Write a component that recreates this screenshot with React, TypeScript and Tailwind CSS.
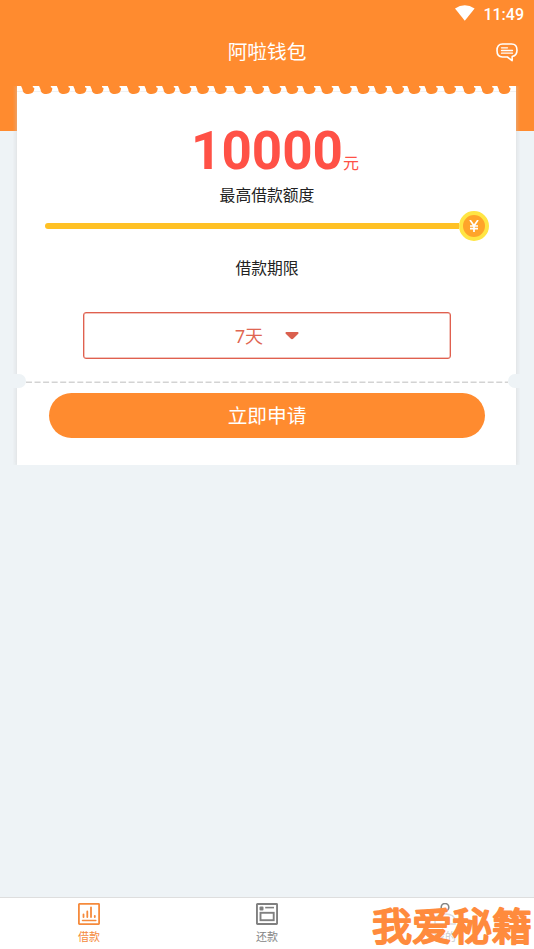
import React from "react";

const teeth = [28.3, 46.3, 64, 80.5, 97.5, 115, 134, 151.7, 169.3, 185.3, 203, 220.7, 240, 258, 275.3, 292.3, 309.5, 327.3, 345.7, 363.5, 381, 398, 414.5, 431.7, 450, 469.5, 487.7, 504.5];

function Wifi() {
  return (
    <svg width="20" height="16" viewBox="0 0 20 16" fill="#fff">
      <path d="M0 3.4Q9.8-3 19.6 3.4L9.8 15.7Z" />
    </svg>
  );
}

function Message() {
  return (
    <svg width="22" height="19" viewBox="0 0 22 19" fill="none" stroke="#fff" strokeWidth="1.6" strokeLinecap="round" strokeLinejoin="round">
      <path d="M6.5 1H15.5C19.2 1 21 3.3 21 7.2C21 11 19.6 12.7 16.2 13.6L16.1 17.7L11.4 14H6.5C2.8 14 1 11.4 1 7.5C1 3.4 2.8 1 6.5 1Z" />
      <path d="M5.5 4.8H11.5M5.5 7.5H16.5M5.5 10.2H16.5" strokeWidth="1.3" />
    </svg>
  );
}

function LoanIcon() {
  return (
    <svg width="22" height="22" viewBox="0 0 22 22" fill="none" stroke="#f58a3c" strokeWidth="1.8">
      <rect x=".9" y=".9" width="20.2" height="20.2" rx=".5" />
      <path d="M5.5 11.3V14M9.3 8.5V14M13 4.5V14M16.8 12.8V14" strokeLinecap="round" />
      <path d="M4.5 17.5H17.8" strokeLinecap="round" strokeWidth="1.5" />
    </svg>
  );
}

function RepayIcon() {
  return (
    <svg width="22" height="22" viewBox="0 0 22 22" fill="none" stroke="#808080" strokeWidth="1.9">
      <rect x=".95" y=".95" width="20.1" height="20.1" rx=".5" />
      <rect x="4.5" y="9.8" width="13.2" height="7.4" />
      <path d="M9.2 4.6H18" strokeWidth="1.6" />
      <rect x="3.5" y="3.6" width="4" height="4" rx="1" fill="#808080" stroke="none" />
    </svg>
  );
}

export default function App() {
  return (
    <div className="relative flex h-[949px] w-[534px] flex-col overflow-hidden bg-[#eef3f6] font-['Roboto','Noto_Sans_CJK_SC',sans-serif]">
      <header className="h-[131px] shrink-0 bg-[#ff8b2f] text-white">
        <div className="flex h-[29px] items-start justify-end gap-2 pr-[10px]">
          <div className="pt-[5px]"><Wifi /></div>
          <span className="pt-[5px] text-[16px] leading-5 font-medium">11:49</span>
        </div>
        <div className="grid h-[46px] grid-cols-[1fr_auto_1fr] items-center">
          <span />
          <h1 className="pt-[2px] text-[19.7px] leading-[44px]">阿啦钱包</h1>
          <div className="flex justify-end pr-4"><Message /></div>
        </div>
      </header>

      <main className="relative z-10 mx-[17px] -mt-[45px] flex h-[379px] w-[499px] shrink-0 flex-col bg-white shadow-[0_0_4px_1px_rgba(205,205,205,0.5)] [clip-path:inset(0_-4px_0_-4px)]">
        <svg className="h-2 w-[499px] shrink-0" viewBox="17 0 499 8" fill="#ff8b2f">
          <path d="M17 5H516V6H17Z" fill="#f1f1f1" />
          {teeth.map((x) => (
            <path key={x} d={`M${x - 7.2} 0H${x + 4.5}V1.3L${x + 6} 2.1C${x + 6} 6 ${x + 4} 8 ${x} 8C${x - 4} 8 ${x - 5.6} 6 ${x - 5.8} 3.2Z`} />
          ))}
        </svg>
        <div className="mt-[25px] flex h-[64px] items-baseline justify-center pl-[17px] leading-[64px] text-[#ff5146]">
          <span className="text-[53px] leading-[64px] font-bold">10000</span>
          <span className="text-[16px] leading-[20px]">元</span>
        </div>
        <div className="mt-px h-[24px] pl-px text-center text-[15.8px] leading-[24px] text-[#222]">最高借款额度</div>
        <div className="mt-[3px] ml-[28px] flex h-[30px] w-[444px] items-center">
          <div className="h-[6px] grow rounded-l-full bg-[#ffc125]" />
          <div className="flex size-[30px] items-center justify-center rounded-full border-4 border-[#ffe544] bg-[#ffa42a]">
            <svg width="10" height="12" viewBox="0 0 10 12" fill="none" stroke="#fff" strokeWidth="1.7">
              <path d="M1 0L5 5.8L9 0M5 5.6V12M1 6H9M1 8.7H9" />
            </svg>
          </div>
        </div>
        <div className="mt-[16px] h-[24px] pl-px text-center text-[15.8px] leading-[24px] text-[#222]">借款期限</div>
        <button className="mt-[31px] ml-[66px] flex h-[47px] w-[368px] items-center justify-center gap-[22px] rounded-[3px] border border-[#e0604f] text-[18px] text-[#df6652] shadow-[inset_0_0_0_0.5px_#e58a7c]">
          <span className="pt-px">7天</span>
          <svg width="14" height="8" viewBox="0 0 14 8" fill="#da604e"><path d="M1.1 0H12.9Q14.2.8 13 1.9L8.4 6.5Q7 8 5.6 6.5L1 1.9Q-.2.8 1.1 0Z" /></svg>
        </button>
        <div className="mt-[15px] -ml-[4px] flex h-[14px] w-[507px] shrink-0 items-center justify-between">
          <div className="h-[14px] w-[13px] rounded-r-full bg-[#eef3f6]" />
          <svg width="482" height="4" viewBox="0 0 482 4"><path d="M0 3.2H482" stroke="#d3d3d3" strokeWidth="1.5" strokeDasharray="6 2.55" /></svg>
          <div className="h-[14px] w-[12px] rounded-l-full bg-[#eef3f6]" />
        </div>
        <button className="mt-[5px] ml-[32px] h-[45px] w-[436px] shrink-0 rounded-full bg-[#ff8b2f] pt-[2px] text-[19.7px] leading-[43px] text-white">立即申请</button>
      </main>

      <nav className="mt-auto grid h-[52px] w-full shrink-0 grid-cols-3 border-t border-[#dedede] bg-white text-[11px] leading-[16px]">
        <div className="flex flex-col items-center pt-[5px] text-[#f58a3c]"><LoanIcon /><span className="mt-[5px]">借款</span></div>
        <div className="flex flex-col items-center pt-[5px] text-[#858585]"><RepayIcon /><span className="mt-[5px]">还款</span></div>
        <div className="flex flex-col items-center pt-[5px] text-[#ccc]">
          <svg width="22" height="22" viewBox="0 0 22 22" fill="none" stroke="#858585" strokeWidth="1.6"><circle cx="11" cy="4.3" r="3.8" /><path d="M1 21V18Q1 11 11 11T21 18V21Z" stroke="#ddd" /></svg>
          <span className="mt-[5px]">我的</span>
        </div>
      </nav>

      <svg className="absolute right-0 bottom-0 z-20" width="168" height="54" viewBox="0 0 168 54">
        <text x="6" y="45" textLength="160" lengthAdjust="spacingAndGlyphs" fontFamily="'Noto Sans CJK SC', sans-serif" fontWeight="400" fontSize="38" fill="#ff8b3d" stroke="#ff8b3d" strokeWidth="2.2" strokeLinejoin="round" strokeLinecap="round">我爱秘籍</text>
      </svg>
    </div>
  );
}
